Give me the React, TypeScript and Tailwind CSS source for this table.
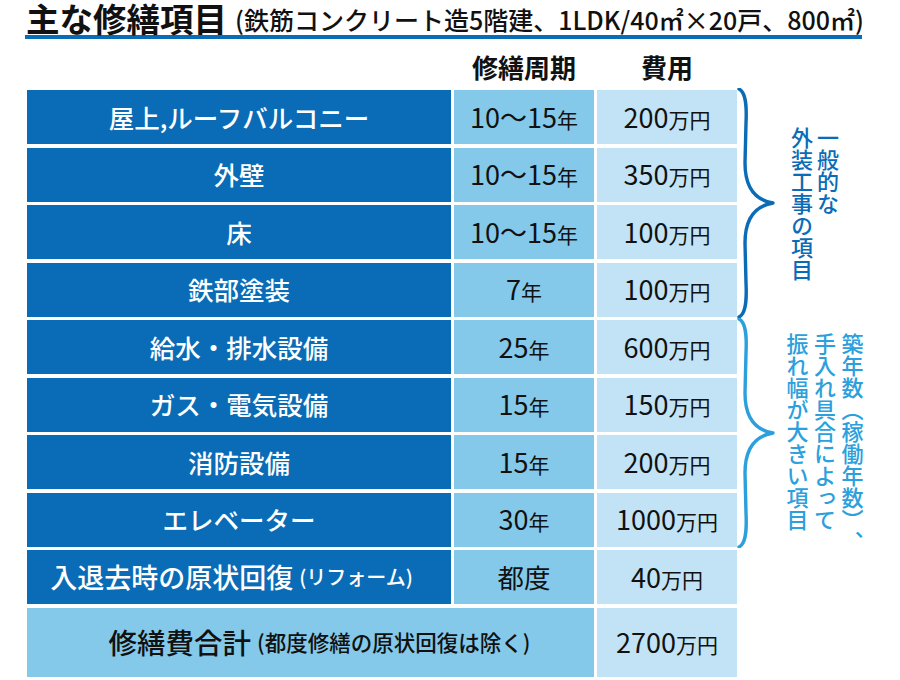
import React from 'react';

type Row = {
  name: string;
  note?: string;
  cycle: string;
  unit?: string;
  cost: string;
};

const rows: Row[] = [
  { name: '屋上,ルーフバルコニー', cycle: '10～15', unit: '年', cost: '200' },
  { name: '外壁', cycle: '10～15', unit: '年', cost: '350' },
  { name: '床', cycle: '10～15', unit: '年', cost: '100' },
  { name: '鉄部塗装', cycle: '7', unit: '年', cost: '100' },
  { name: '給水・排水設備', cycle: '25', unit: '年', cost: '600' },
  { name: 'ガス・電気設備', cycle: '15', unit: '年', cost: '150' },
  { name: '消防設備', cycle: '15', unit: '年', cost: '200' },
  { name: 'エレベーター', cycle: '30', unit: '年', cost: '1000' },
  { name: '入退去時の原状回復', note: '(リフォーム)', cycle: '都度', cost: '40' },
];

const Brace: React.FC<{ color: string }> = ({ color }) => (
  <svg width="40" height="230" viewBox="0 0 40 230" className="shrink-0">
    <path
      d="M2,1 C8,4 10,14 9,35 L8,75 C8,100 18,112 36,115 C18,118 8,130 8,155 L9,195 C10,216 8,226 2,229"
      fill="none"
      stroke={color}
      strokeWidth={3.4}
      strokeLinecap="round"
      strokeLinejoin="round"
    />
  </svg>
);

const Cost: React.FC<{ value: string }> = ({ value }) => (
  <span className="text-[#111] whitespace-nowrap">
    <span className="text-[27px]">{value}</span>
    <span className="text-[21px]">万円</span>
  </span>
);

const App: React.FC = () => {
  return (
    <div className="w-[900px] h-[680px] bg-white overflow-hidden font-['Noto_Sans_CJK_JP',sans-serif] text-[#111]">
      {/* title */}
      <div className="ml-[25px] w-[837px] h-[39px] border-b-4 border-[#0a6cb6] flex items-end whitespace-nowrap">
        <h1 className="text-[33.5px] font-bold leading-[35px] pl-[1px]">主な修繕項目</h1>
        <span className="text-[25px] font-medium leading-[32px] ml-[8px]">
          (鉄筋コンクリート造5階建、1LDK/40㎡×20戸、800㎡)
        </span>
      </div>

      <div className="flex">
        {/* table */}
        <div className="ml-[27px] w-[710px]">
          <div className="grid grid-cols-[424px_140px_140px] gap-x-[3px] h-[51px] items-center">
            <div />
            <div className="text-center text-[26px] font-bold pt-[4px]">修繕周期</div>
            <div className="text-center text-[26px] font-bold pt-[4px]">費用</div>
          </div>

          <div className="flex flex-col gap-y-[3.5px]">
            {rows.map((r) => (
              <div key={r.name} className="grid grid-cols-[424px_140px_140px] gap-x-[3px] h-[54px]">
                {r.note ? (
                  <div className="bg-[#0a6cb6] text-white flex items-center justify-center font-medium whitespace-nowrap pr-[15px]">
                    <span className="text-[27px]">{r.name}</span>
                    <span className="text-[20px] ml-[6px]">{r.note}</span>
                  </div>
                ) : (
                  <div className="bg-[#0a6cb6] text-white flex items-center justify-center font-medium whitespace-nowrap text-[25.5px]">
                    {r.name}
                  </div>
                )}
                <div className="bg-[#84c9ea] flex items-center justify-center whitespace-nowrap">
                  {r.unit ? (
                    <span>
                      <span className="text-[27px]">{r.cycle}</span>
                      <span className="text-[21px]">{r.unit}</span>
                    </span>
                  ) : (
                    <span className="text-[26.5px] font-normal">{r.cycle}</span>
                  )}
                </div>
                <div className="bg-[#c2e3f5] flex items-center justify-center">
                  <Cost value={r.cost} />
                </div>
              </div>
            ))}
          </div>

          <div className="grid grid-cols-[567px_140px] gap-x-[3px] h-[69px] mt-[4px]">
            <div className="bg-[#84c9ea] flex items-center justify-center whitespace-nowrap pl-[18px]">
              <span className="text-[28.5px] font-medium">修繕費合計</span>
              <span className="text-[21.5px] font-medium ml-[6px]">(都度修繕の原状回復は除く)</span>
            </div>
            <div className="bg-[#c2e3f5] flex items-center justify-center">
              <Cost value="2700" />
            </div>
          </div>
        </div>

        {/* side notes */}
        <div className="pt-[49px] flex flex-col">
          <div className="flex h-[230px]">
            <Brace color="#0a6cb6" />
            <p className="[writing-mode:vertical-rl] [text-spacing-trim:space-all] whitespace-nowrap text-[22px] leading-[26px] font-medium text-[#0a6cb6] ml-[12px] pt-[39px]">
              一般的な<br />外装工事の項目
            </p>
          </div>
          <div className="flex h-[230px]">
            <Brace color="#2ba0dc" />
            <p className="[writing-mode:vertical-rl] [text-spacing-trim:space-all] whitespace-nowrap text-[22px] leading-[27.5px] font-medium text-[#2ba0dc] ml-[6px] pt-[15px]">
              築年数（稼働年数）、<br />手入れ具合によって<br />振れ幅が大きい項目
            </p>
          </div>
        </div>
      </div>
    </div>
  );
};

export default App;
